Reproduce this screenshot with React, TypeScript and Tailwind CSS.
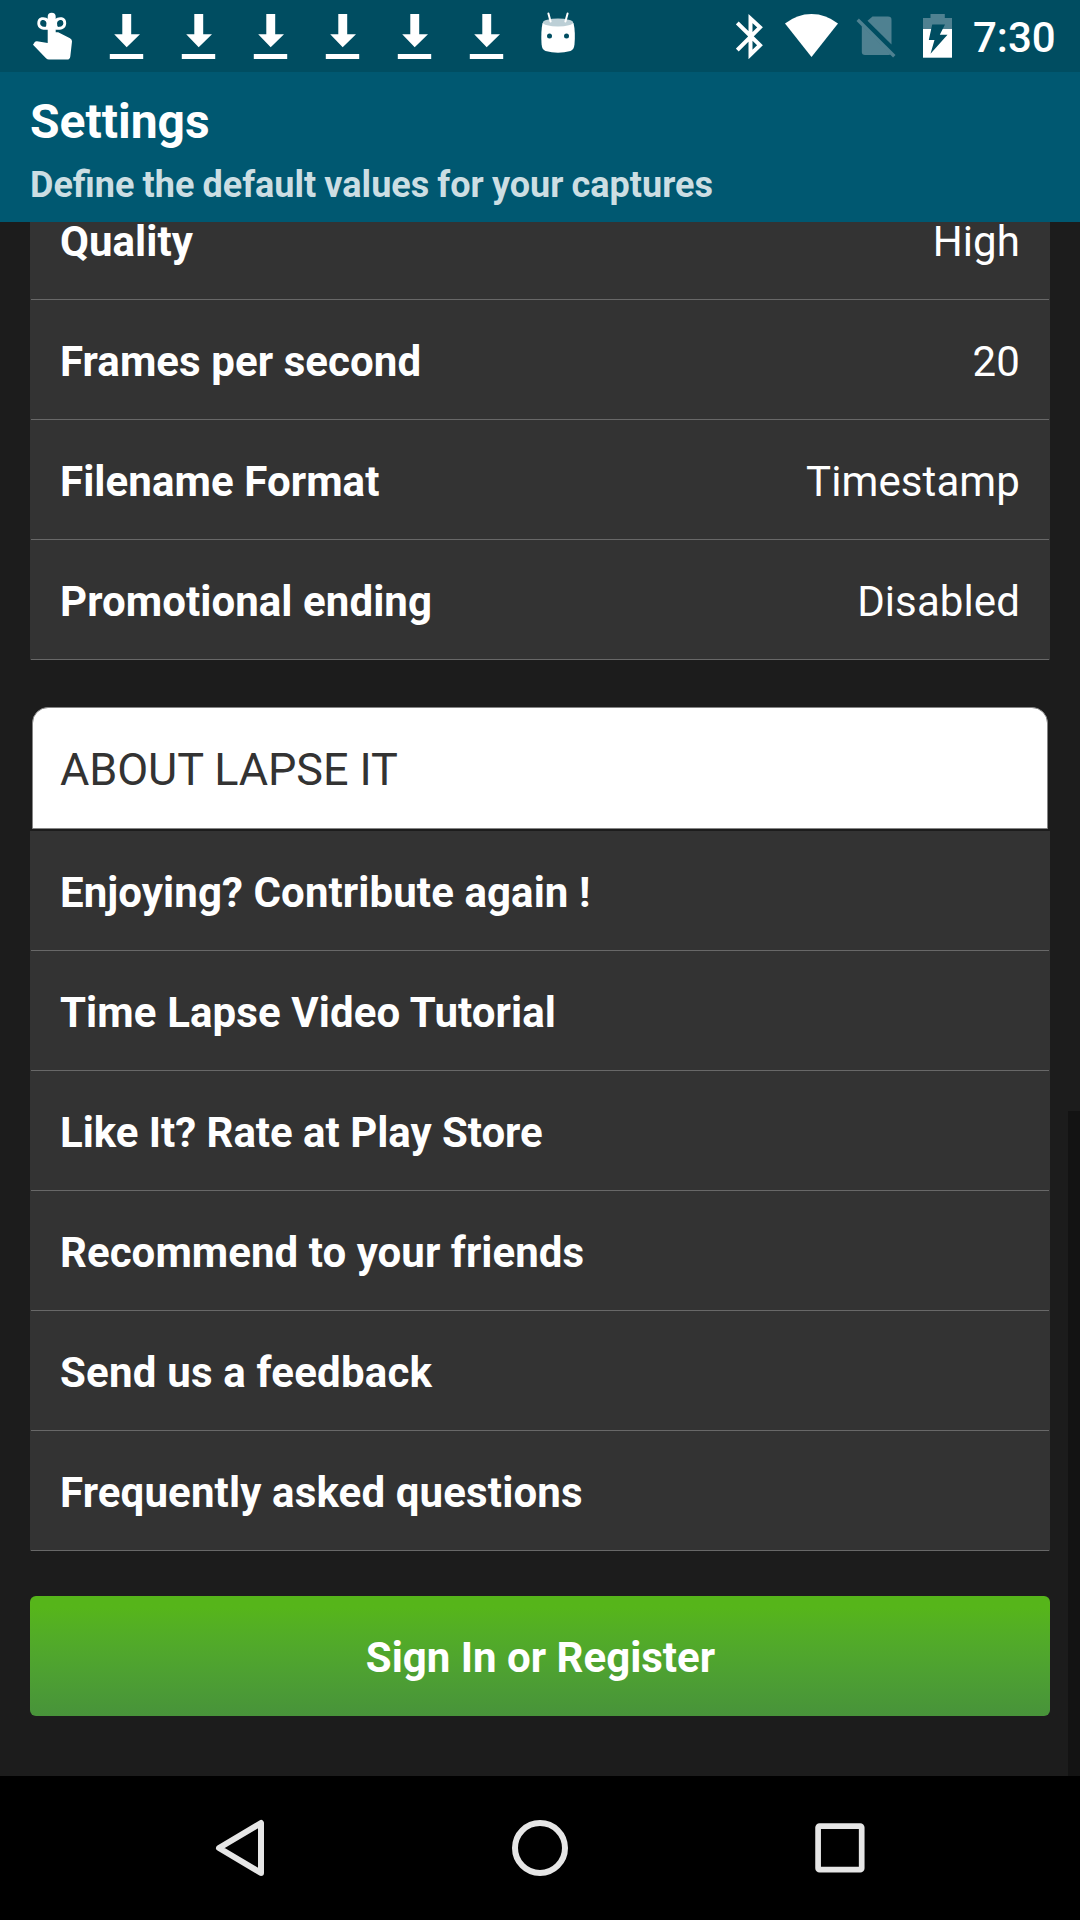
import React from "react";

const captureRows = [
  { label: "Quality", value: "High", tracking: "tracking-[0.05px]" },
  { label: "Frames per second", value: "20", tracking: "tracking-[0.07px]" },
  { label: "Filename Format", value: "Timestamp", tracking: "tracking-[0.08px]" },
  { label: "Promotional ending", value: "Disabled", tracking: "tracking-[0.07px]" },
];

const aboutRows = [
  { label: "Enjoying? Contribute again !", tracking: "tracking-[0.09px]" },
  { label: "Time Lapse Video Tutorial", tracking: "tracking-[0.1px]" },
  { label: "Like It? Rate at Play Store", tracking: "tracking-[-0.03px]" },
  { label: "Recommend to your friends", tracking: "tracking-[0.05px]" },
  { label: "Send us a feedback", tracking: "tracking-[0.2px]" },
  { label: "Frequently asked questions", tracking: "tracking-[0.14px]" },
];

function ReminderIcon() {
  return (
    <svg className="h-[72px] w-[72px]" viewBox="18 0 72 72" fill="#fff">
      <path d="M47.7 16.7a4 4 0 0 1 8 0V32.3h2.5L70 38.3Q72.2 39.5 72 41.5L70.3 56.5Q70 59.6 67 59.6H49Q47.3 59.6 46 58.3L33 44.8L34.8 42Q35.6 41.2 37 41.3L47.7 43Z" />
      <path
        d="M48.3 20.500C44 17.300 38.700 18 38.700 23.200C38.700 28.600 44 28.500 48.300 28.300M55.200 20.500C59.500 17.300 64.800 18 64.800 23.200C64.800 28.600 59.500 28.500 55.200 28.300"
        fill="none"
        stroke="#fff"
        strokeWidth="2.8"
      />
      <path d="M44 19.500Q49 23.200 44.600 28L48.500 29V19ZM59.500 19.500Q54.500 23.200 58.900 28L55 29V19Z" />
    </svg>
  );
}

function DownloadIcon() {
  return (
    <svg className="h-[72px] w-[72px]" viewBox="0 0 72 72" fill="#fff">
      <path d="M32.300 14H41.200V34.200H50L36.700 47.200L24.200 34.200H32.300ZM19.800 54H53.200V59H19.800Z" />
    </svg>
  );
}

function MascotIcon() {
  return (
    <svg className="h-[72px] w-[72px]" viewBox="522 0 72 72">
      <path
        d="M542.500 23C541.300 29 541 37 541.600 44.500Q542 49.500 545.500 51Q558 54.400 570.500 51Q574 49.500 574.500 44.500C575.200 37 575 29 573.500 23Z"
        fill="#fff"
      />
      <ellipse cx="558" cy="22.500" rx="15.200" ry="4" fill="#bccfd6" />
      <path d="M548.400 13.500L550.600 21.500M567.600 13.500L565.400 21.500" stroke="#fff" strokeWidth="2" strokeLinecap="round" />
      <circle cx="549.500" cy="36" r="2.500" fill="#004d61" />
      <circle cx="566.500" cy="36" r="2.500" fill="#004d61" />
    </svg>
  );
}

function BluetoothIcon() {
  return (
    <svg className="h-[72px] w-[28px]" viewBox="736 0 28 72">
      <path
        d="M737.300 23L760 45.300L750.500 54.500V18.500L760 27.300L737.300 50"
        fill="none"
        stroke="#fff"
        strokeWidth="4"
      />
    </svg>
  );
}

function WifiIcon() {
  return (
    <svg className="ml-[20px] h-[72px] w-[56px]" viewBox="784 0 56 72">
      <path d="M785 23.600Q797 14 811.500 14Q826 14 838 23.600L811.500 57Z" fill="#fff" />
    </svg>
  );
}

function NoSimIcon() {
  return (
    <svg className="ml-[16px] h-[72px] w-[40px]" viewBox="856 0 40 72" fill="#4f8191">
      <path d="M872.500 16.500H888Q891.500 16.500 891.500 19.800V44.500L867.500 20.800Z" />
      <path d="M861.800 25.500L890.800 54.300Q889.800 55 888.500 55H865Q861.800 55 861.800 51.800Z" />
      <path d="M856.500 21L858.900 18.600L895.500 55L893.100 57.400Z" />
    </svg>
  );
}

function BatteryIcon() {
  return (
    <svg className="ml-[27px] h-[72px] w-[29px]" viewBox="923 0 29 72">
      <path d="M923 29V18H930.500V14H944.800V18H952V29Z" fill="#4f8191" />
      <path d="M923 29H952V57.700H923Z" fill="#fff" />
      <path d="M932.200 24.500H945L939.800 34.800H947.500L930.500 53.800L934.500 40H928.800Z" fill="#004d61" />
    </svg>
  );
}

function Row({ label, value, tracking }: { label: string; value?: string; tracking: string }) {
  return (
    <div className="relative flex h-[120px] shrink-0 items-center justify-between bg-[#333333] px-[30px] pt-[3px] text-[42px] leading-[50px] text-white">
      <span className={`font-bold ${tracking}`}>{label}</span>
      {value && <span className="tracking-[0.1px]">{value}</span>}
      <div className="absolute bottom-0 left-px right-px h-px bg-[#686868]" />
    </div>
  );
}

export default function App() {
  return (
    <div className="flex h-[1920px] w-[1080px] flex-col overflow-hidden bg-[#1c1c1c] font-['Roboto',sans-serif]">
      <div className="flex h-[72px] shrink-0 items-center bg-[#004d61] pl-[18px]">
        <ReminderIcon />
        <DownloadIcon />
        <DownloadIcon />
        <DownloadIcon />
        <DownloadIcon />
        <DownloadIcon />
        <DownloadIcon />
        <MascotIcon />
        <div className="ml-auto flex items-center pr-[24px]">
          <BluetoothIcon />
          <WifiIcon />
          <NoSimIcon />
          <BatteryIcon />
          <span className="ml-[21px] w-[83px] whitespace-nowrap pt-[3px] text-[42px] font-medium leading-[50px] text-white">7:30</span>
        </div>
      </div>

      <header className="flex h-[150px] shrink-0 flex-col bg-[#005871] px-[30px] pt-[22px] font-bold">
        <h1 className="text-[48px] leading-[56px] text-white">Settings</h1>
        <p className="mt-[14px] text-[36px] leading-[42px] text-[#ccdee3] [word-spacing:-0.8px]">
          Define the default values for your captures
        </p>
      </header>

      <main className="relative flex h-[1554px] shrink-0 flex-col overflow-hidden px-[30px]">
        <section className="-mt-[42px] flex flex-col">
          {captureRows.map((r) => (
            <Row key={r.label} label={r.label} value={r.value} tracking={r.tracking} />
          ))}
        </section>

        <section className="mt-[47px] flex flex-col">
          <h2 className="mx-[2px] mb-[2px] flex h-[122px] items-center rounded-t-[16px] border border-[#858585] bg-white pl-[27px] pt-[4px] text-[45px] font-normal leading-[52px] tracking-[-0.08px] text-[#333333]">
            ABOUT LAPSE IT
          </h2>
          {aboutRows.map((r) => (
            <Row key={r.label} label={r.label} tracking={r.tracking} />
          ))}
        </section>

        <button className="mt-[45px] h-[120px] shrink-0 rounded-[6px] bg-linear-to-b from-[#56b51a] from-10% to-[#48933a] pl-px pt-[3px] text-[42px] font-bold leading-[50px] text-white">
          Sign In or Register
        </button>
        <div className="absolute bottom-0 right-0 h-[665px] w-[12px] bg-[#131313]" />
      </main>

      <nav className="flex h-[144px] shrink-0 items-center justify-center gap-[240px] bg-black">
        <svg className="h-[60px] w-[60px]" viewBox="210 1818 60 60" fill="none" stroke="#e6e6e6" strokeWidth="6" strokeLinejoin="round">
          <path d="M219 1848L261 1823V1873Z" />
        </svg>
        <svg className="h-[60px] w-[60px]" viewBox="0 0 60 60" fill="none" stroke="#e6e6e6" strokeWidth="6">
          <circle cx="30" cy="30" r="25" />
        </svg>
        <svg className="h-[60px] w-[60px]" viewBox="0 0 60 60" fill="none" stroke="#e6e6e6" strokeWidth="5.700">
          <rect x="8.100" y="8.100" width="43.600" height="43.600" rx="1.500" />
        </svg>
      </nav>
    </div>
  );
}
